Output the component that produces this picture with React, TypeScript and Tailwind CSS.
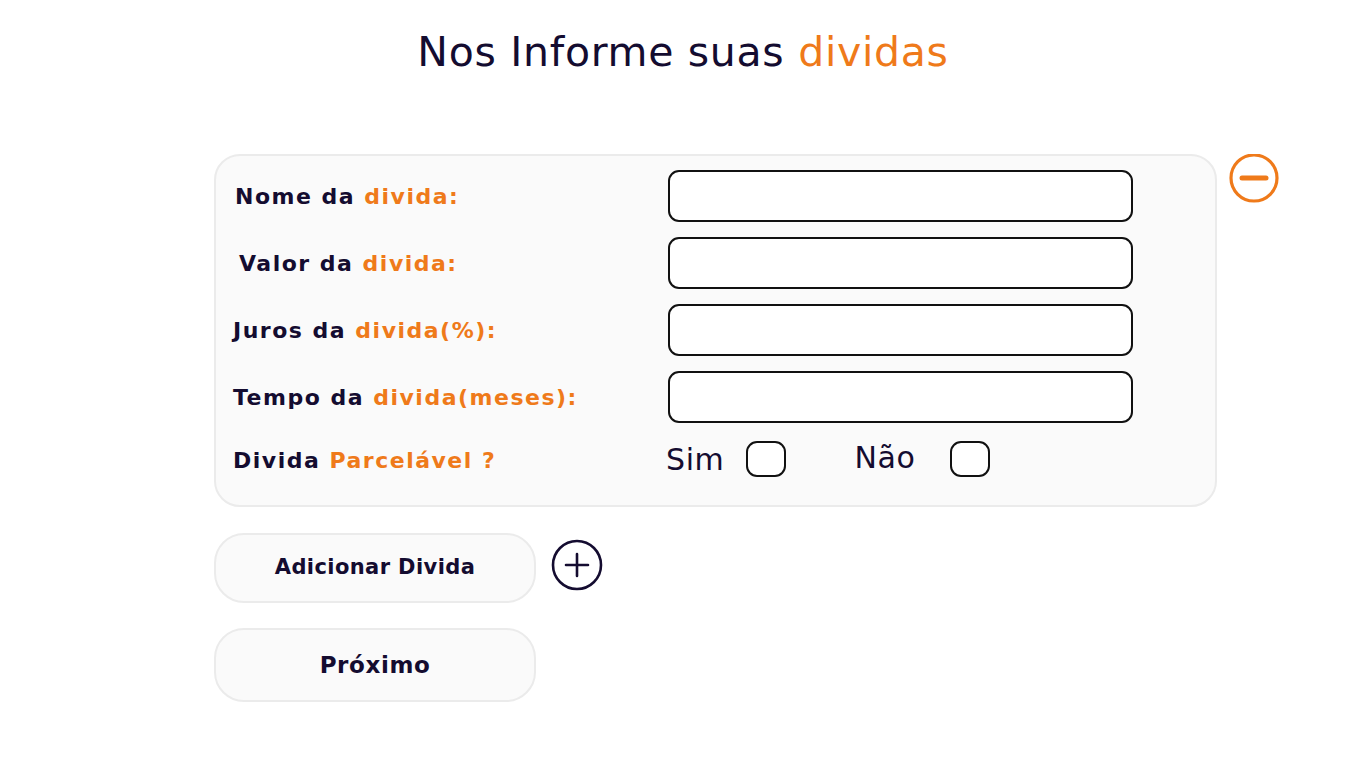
import { useState } from "react";

const FONT = "font-['DejaVu_Sans',_'Noto_Sans',_sans-serif]";

function Label({ dark, orange }: { dark: string; orange: string }) {
  return (
    <span className="text-[22px] font-bold text-[#140c30] whitespace-nowrap tracking-[1.5px]">
      {dark} <span className="text-[#ef7a1a]">{orange}</span>
    </span>
  );
}

function Box({ checked, onClick }: { checked: boolean; onClick: () => void }) {
  return (
    <button
      onClick={onClick}
      className={`w-[40px] h-[36px] rounded-[11px] border-2 border-[#111] ${checked ? "bg-[#ef7a1a]" : "bg-white"}`}
    />
  );
}

export default function App() {
  const [parcel, setParcel] = useState<"sim" | "nao" | null>(null);

  const rows = [
    { dark: "Nome da", orange: "divida:", pad: "pl-[19px]" },
    { dark: "Valor da", orange: "divida:", pad: "pl-[23px]" },
    { dark: "Juros da", orange: "divida(%):", pad: "pl-[17px]" },
    { dark: "Tempo da", orange: "divida(meses):", pad: "pl-[17px]" },
  ];

  return (
    <div className={`min-h-screen bg-white ${FONT}`}>
      <h1 className="pt-[26px] text-center text-[41px] leading-[52px] text-[#140c30] font-normal tracking-[0.7px]">
        Nos Informe suas <span className="text-[#ef7a1a]">dividas</span>
      </h1>

      <div className="mt-[76px] ml-[214px] flex items-start gap-[11px]">
        <div className="w-[1003px] h-[353px] rounded-[26px] bg-[#fafafa] border-2 border-[#ebebeb] pt-[14px] flex flex-col gap-[15px]">
          {rows.map((r) => (
            <div key={r.orange + r.dark} className="flex items-center h-[52px]">
              <div className={`w-[452px] ${r.pad}`}>
                <Label dark={r.dark} orange={r.orange} />
              </div>
              <input className="w-[465px] h-[52px] rounded-[11px] border-2 border-[#111] bg-white px-3 text-lg outline-none" />
            </div>
          ))}
          <div className="flex items-center h-[40px] mt-[2px]">
            <div className="w-[450px] pl-[17px]">
              <Label dark="Divida" orange="Parcelável ?" />
            </div>
            <span className="text-[30px] text-[#140c30] leading-none tracking-[0.6px]">Sim</span>
            <div className="ml-[22px] mt-[2px]">
              <Box checked={parcel === "sim"} onClick={() => setParcel("sim")} />
            </div>
            <span className="ml-[68px] text-[30px] text-[#140c30] leading-none -mt-[5px] tracking-[0.6px]">Não</span>
            <div className="ml-[35px] mt-[2px]">
              <Box checked={parcel === "nao"} onClick={() => setParcel("nao")} />
            </div>
          </div>
        </div>

        <button className="text-[#ef7a1a]" aria-label="Remover divida">
          <svg width="52" height="52" viewBox="0 0 52 52" fill="none" stroke="currentColor" strokeWidth="3.2" strokeLinecap="round">
            <circle cx="26" cy="24" r="23" />
            <path d="M14 24h24" strokeWidth="5" />
          </svg>
        </button>
      </div>

      <div className="ml-[214px] mt-[26px] flex items-center gap-[15px]">
        <button className="w-[322px] h-[70px] rounded-[30px] bg-[#fafafa] border-2 border-[#ebebeb] text-[21px] font-bold text-[#140c30] tracking-[0.4px]">
          Adicionar Divida
        </button>
        <button className="text-[#140c30] -mt-[6px]" aria-label="Adicionar">
          <svg width="52" height="52" viewBox="0 0 52 52" fill="none" stroke="currentColor" strokeWidth="2.6" strokeLinecap="round">
            <circle cx="26" cy="26" r="24" />
            <path d="M26 15v22M15 26h22" />
          </svg>
        </button>
      </div>

      <div className="ml-[214px] mt-[25px]">
        <button className="w-[322px] h-[74px] rounded-[30px] bg-[#fafafa] border-2 border-[#ebebeb] text-[23px] font-bold text-[#140c30] tracking-[0.6px]">
          Próximo
        </button>
      </div>
    </div>
  );
}
